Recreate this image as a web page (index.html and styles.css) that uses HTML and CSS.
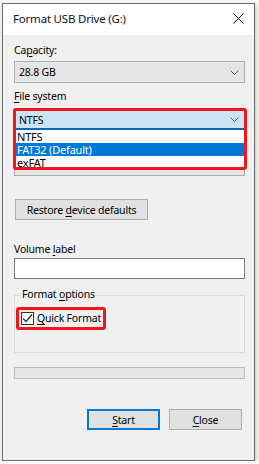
FILE: index.html
```html
<!DOCTYPE HTML>
<html lang="en">
  <head>
    <meta charset="utf-8">
    <title>Format USB Drive (G:)</title>
    <link rel="stylesheet" href="styles.css">
  </head>
  <body>
    <div class="window">
      <div class="titlebar">
        <span class="title">Format USB Drive (G:)</span>
        <svg class="close-x" width="11" height="11" viewBox="0 0 11 11">
          <path d="M0.5 0.5 L10.5 10.5 M10.5 0.5 L0.5 10.5" stroke="#111" stroke-width="1" fill="none"/>
        </svg>
      </div> <!-- .titlebar -->
      <div class="content">
        <div class="label">Ca<u>p</u>acity:</div>
        <div class="combo">
          <span>28.8 GB</span>
          <svg class="chev" width="9" height="5" viewBox="0 0 9 5"><path d="M0.5 0.5 L4.5 4.5 L8.5 0.5" stroke="#555" fill="none"/></svg>
        </div>

        <div class="label gap-label"><u>F</u>ile system</div>
        <div class="fs-area">
          <div class="combo focused">
            <span>NTFS</span>
            <svg class="chev" width="9" height="5" viewBox="0 0 9 5"><path d="M0.5 0.5 L4.5 4.5 L8.5 0.5" stroke="#555" fill="none"/></svg>
          </div>
          <!-- allocation unit size row, covered by the open list -->
          <div class="label gap-label"></div>
          <div class="combo"></div>

          <ul class="dropdown">
            <li>NTFS</li>
            <li class="selected">FAT32 (Default)</li>
            <li>exFAT</li>
          </ul>
          <div class="mark mark-fs"></div>
        </div> <!-- .fs-area -->

        <button class="btn restore">Restore <u>d</u>evice defaults</button>

        <div class="label volume-label">Volume <u>l</u>abel</div>
        <div class="textbox"></div>

        <div class="group">
          <span class="legend">Format <u>o</u>ptions</span>
          <label class="check">
            <span class="box">
              <svg width="11" height="11" viewBox="0 0 11 11"><path d="M1 5.5 L4 8.5 L10 1.5" stroke="#333" stroke-width="1.3" fill="none"/></svg>
            </span>
            <span><u>Q</u>uick Format</span>
          </label>
          <div class="mark mark-quick"></div>
        </div> <!-- .group -->

        <div class="progress"></div>

        <div class="actions">
          <button class="btn primary"><u>S</u>tart</button>
          <button class="btn"><u>C</u>lose</button>
        </div> <!-- .actions -->
      </div> <!-- .content -->
    </div> <!-- .window -->
  </body>
</html>
```

FILE: styles.css
```css
* {
  margin: 0;
  padding: 0;
  box-sizing: border-box; }

body {
  background: #fafafa;
  font-family: "Noto Sans", "Open Sans", sans-serif;
  font-size: 10.5px;
  letter-spacing: -0.2px;
  color: #000; }

u {
  text-underline-offset: 2px; }

.window {
  position: relative;
  width: 253px;
  height: 458px;
  margin: 3px 0 0 2px;
  border: 1px solid #6e6e6e;
  background: #f0f0f0;
  box-shadow: 1px 2px 5px rgba(0, 0, 0, 0.25); }

.titlebar {
  height: 31px;
  background: #fff;
  display: flex;
  align-items: center;
  justify-content: space-between;
  padding: 0 10px 0 10px; }

.title {
  font-size: 11.5px;
  color: #111;
  margin-top: -2px; }

.close-x {
  margin-top: -2px; }

.content {
  padding: 8px 9px 0 11px; }

.label {
  line-height: 15px;
  height: 15px; }

.gap-label {
  margin-top: 6px; }

.combo {
  margin-top: 3px;
  height: 22px;
  border: 1px solid #adadad;
  background: #e5e5e5;
  display: flex;
  align-items: center;
  justify-content: space-between;
  padding: 0 5px 0 4px; }

.combo.focused {
  background: #cce4f7;
  border-color: #cce4f7;
  border-bottom: 2px solid #0a67b7;
  height: 20px;
  margin-top: 6px; }

.fs-area {
  position: relative; }

.dropdown {
  position: absolute;
  left: 0;
  right: 0;
  top: 20px;
  list-style: none;
  background: #fff;
  border: 1px solid #646464;
  border-top: none;
  font-size: 11px; }

.dropdown li {
  height: 13px;
  line-height: 13px;
  padding-left: 2px; }

.dropdown li.selected {
  background: #0078d7;
  color: #fff; }

.mark {
  position: absolute;
  border: 3px solid #f4141b;
  border-radius: 3px; }

.mark-fs {
  left: -1px;
  right: -2px;
  top: -2px;
  height: 62px; }

.btn {
  font: inherit;
  letter-spacing: inherit;
  height: 21px;
  border: 1px solid #adadad;
  background: #e1e1e1;
  color: #000; }

.restore {
  display: block;
  margin: 23px 0 0 1px;
  width: 133px; }

.volume-label {
  margin-top: 22px; }

.textbox {
  margin-top: 1px;
  height: 21px;
  background: #fff;
  border: 1px solid #7a7a7a; }

.group {
  position: relative;
  margin-top: 16px;
  height: 58px;
  border: 1px solid #dcdcdc;
  padding: 15px 0 0 6px; }

.legend {
  position: absolute;
  left: 6px;
  top: -9px;
  padding: 0 1px;
  line-height: 15px;
  background: #f0f0f0; }

.check {
  display: flex;
  align-items: center;
  gap: 3px; }

.box {
  width: 13px;
  height: 13px;
  border: 1px solid #333;
  background: #fff;
  display: flex;
  align-items: center;
  justify-content: center; }

.mark-quick {
  left: 1px;
  top: 11px;
  width: 90px;
  height: 23px; }

.progress {
  margin-top: 14px;
  height: 12px;
  border: 1px solid #bcbcbc;
  background: #e6e6e6; }

.actions {
  display: flex;
  justify-content: flex-end;
  gap: 9px;
  margin: 30px 3px 0 0; }

.actions .btn {
  width: 73px; }

.btn.primary {
  border: 2px solid #0078d7; }
```
